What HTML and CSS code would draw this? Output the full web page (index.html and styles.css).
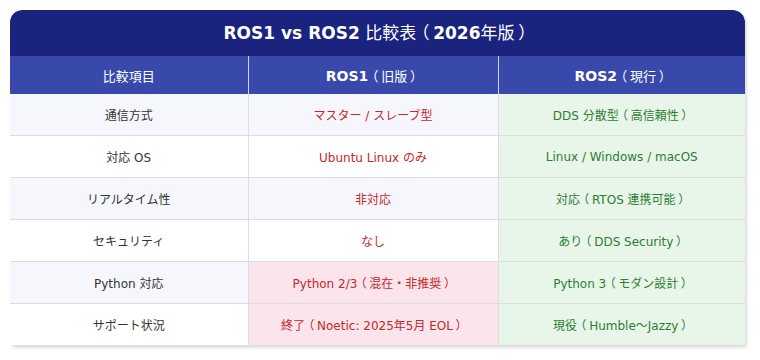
FILE: index.html
```html
<!DOCTYPE html>
<html>
<head>
<meta charset="utf-8">
<link rel="stylesheet" href="styles.css">
</head>
<body>
<div class="card">
  <table class="cmp">
    <caption class="title"><b>ROS1 vs ROS2</b> <span class="n">比較表<span class="po">（</span></span><b>2026</b><span class="n">年版<span class="pc">）</span></span></caption>
    <colgroup><col class="c1"><col class="c2"><col class="c3"></colgroup>
    <thead>
      <tr><th>比較項目</th><th><b>ROS1</b><span class="po">（</span>旧版<span class="pc">）</span></th><th><b>ROS2</b><span class="po">（</span>現行<span class="pc">）</span></th></tr>
    </thead>
    <tbody>
      <tr class="odd"><td class="item">通信方式</td><td class="old">マスター / スレーブ型</td><td class="new">DDS 分散型<span class="po">（</span>高信頼性<span class="pc">）</span></td></tr>
      <tr><td class="item">対応 OS</td><td class="old">Ubuntu Linux のみ</td><td class="new">Linux / Windows / macOS</td></tr>
      <tr class="odd"><td class="item">リアルタイム性</td><td class="old">非対応</td><td class="new">対応<span class="po">（</span>RTOS 連携可能<span class="pc">）</span></td></tr>
      <tr><td class="item">セキュリティ</td><td class="old">なし</td><td class="new">あり<span class="po">（</span>DDS Security<span class="pc">）</span></td></tr>
      <tr class="odd"><td class="item">Python 対応</td><td class="old warn">Python 2/3<span class="po">（</span>混在・非推奨<span class="pc">）</span></td><td class="new">Python 3<span class="po">（</span>モダン設計<span class="pc">）</span></td></tr>
      <tr><td class="item">サポート状況</td><td class="old warn">終了<span class="po">（</span>Noetic: 2025年5月 EOL<span class="pc">）</span></td><td class="new">現役<span class="po">（</span>Humble〜Jazzy<span class="pc">）</span></td></tr>
    </tbody>
  </table>
</div>
</body>
</html>
```

FILE: styles.css
```css
html, body {
  margin: 0;
  padding: 0;
  background: #ffffff;
}
body {
  padding: 10px;
  font-family: "DejaVu Sans", "Noto Sans CJK SC", sans-serif;
}
.card {
  width: 735px;
  border-radius: 12px 12px 4px 4px;
  box-shadow: 2px 2px 3px rgba(0, 0, 0, 0.13);
  overflow: hidden;
}
.cmp {
  width: 735px;
  border-collapse: collapse;
  table-layout: fixed;
}
.c1 { width: 238px; }
.c2 { width: 250px; }
.c3 { width: 247px; }
.title {
  background: #1a237e;
  color: #ffffff;
  height: 46px;
  line-height: 46px;
  font-size: 17px;
  text-align: center;
  border-radius: 12px 12px 0 0;
}
.title b { font-weight: bold; }
.n { font-weight: normal; }
.po, .pc {
  font-feature-settings: "palt";
  margin: 0 0.25em;
}
.cmp th {
  background: #3949ab;
  color: #ffffff;
  height: 38px;
  padding: 0;
  font-size: 13px;
  font-weight: normal;
  text-align: center;
  border-left: 1px solid rgba(255, 255, 255, 0.75);
}
.cmp th:first-child { border-left: none; }
.cmp th b { font-weight: bold; font-size: 14px; }
.cmp td {
  height: 41px;
  padding: 0 8px;
  font-size: 12px;
  text-align: center;
  border-bottom: 1px solid #dddddd;
  border-left: 1px solid #dddddd;
  background: #ffffff;
}
.cmp td:first-child { border-left: none; }
.cmp tr.odd td { background: #f6f7fc; }
.item { color: #333333; }
.old { color: #c62828; }
.cmp td.warn, .cmp tr.odd td.warn { background: #fce4ec; }
.cmp td.new, .cmp tr.odd td.new { background: #e8f5e9; color: #2e7d32; }
```
